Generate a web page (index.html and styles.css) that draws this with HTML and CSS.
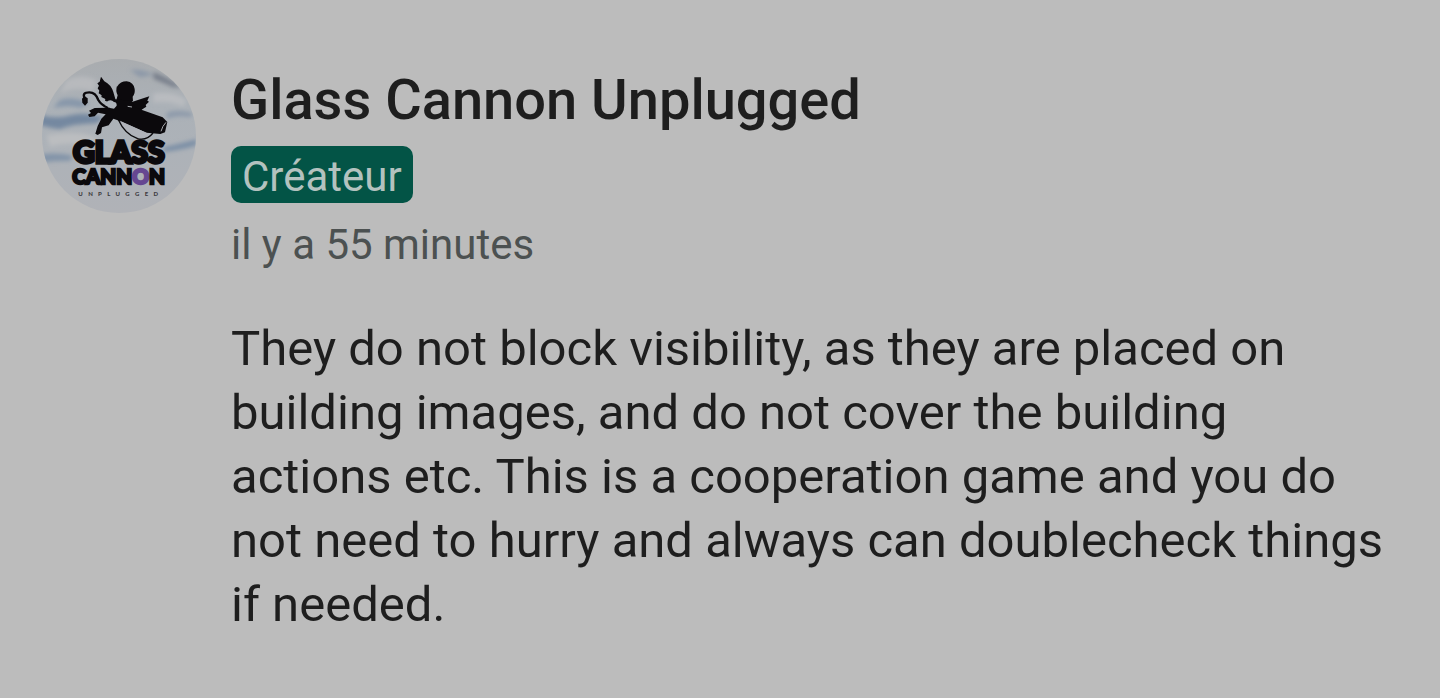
FILE: index.html
```html
<!DOCTYPE html>
<html lang="fr">
<head>
  <meta charset="UTF-8" />
  <meta name="viewport" content="width=device-width, initial-scale=1" />
  <title>Commentaires – Glass Cannon Unplugged</title>
  <link rel="stylesheet" href="styles.css">
</head>
<body>
  <article class="comment">
    <svg class="avatar" viewBox="36 27 462 462" role="img" aria-label="Glass Cannon Unplugged">
      <defs>
        <linearGradient id="sky" x1="0" y1="0" x2="0" y2="1">
          <stop offset="0" stop-color="#a9acaf" />
          <stop offset="0.3" stop-color="#abb1b7" />
          <stop offset="0.6" stop-color="#adb2b8" />
          <stop offset="1" stop-color="#b0b2b7" />
        </linearGradient>
        <clipPath id="disc"><circle cx="267" cy="258" r="231" /></clipPath>
        <filter id="soft" x="-30%" y="-80%" width="160%" height="260%"><feGaussianBlur stdDeviation="7" /></filter>
      </defs>

      <g clip-path="url(#disc)">
        <rect x="36" y="27" width="462" height="462" fill="url(#sky)" />
        <g filter="url(#soft)">
          <path fill="#7488a0" d="M30 194 Q80 208 120 196 T220 202 L200 220 Q120 222 90 238 Q60 234 30 226Z" />
          <path fill="#8797aa" d="M90 150 Q130 138 180 160 L150 174 Q120 164 70 174Z" />
          <path fill="#8394a9" d="M30 314 Q80 306 130 318 L120 332 Q70 332 30 338Z" />
          <path fill="#7c8fa6" d="M400 292 Q440 284 500 268 L500 286 Q450 302 400 306Z" />
          <path fill="#787f8b" d="M370 66 Q410 80 455 112 L430 112 Q400 98 370 86Z" />
          <path fill="#8c98a8" d="M300 60 Q340 56 370 74 L330 82Z" />
          <path fill="#8d9aaa" d="M410 188 Q450 176 490 190 L480 202 Q450 194 410 206Z" />
          <path fill="#bbbdc0" d="M50 256 Q140 240 200 262 L190 294 Q120 270 60 290Z" />
          <path fill="#b9bcc0" d="M370 130 Q430 122 470 150 L460 170 Q420 150 370 158Z" />
          <path fill="#b8babd" d="M110 90 Q160 70 200 92 L190 124 Q140 108 90 130Z" />
        </g>

        <!-- cherub riding the cannon -->
        <g fill="#0b090c">
          <path d="M213 80 L223 94 Q243 104 250 126 L258 154 L242 158 L225 152 L226 147 L214 141 L215 136 L206 130 L208 122 L203 115 L207 107 L202 100 L209 95Z" />
          <path d="M261 110 Q271 94 290 94 Q311 97 314 117 Q316 131 308 140 L309 153 L298 160 L276 160 L259 150 L263 136 Q256 122 261 108Z" />
          <path d="M299 158 L326 149 L358 139 L352 152 L357 155 L347 165 L349 170 L337 178 L328 186 L303 176Z" />
          <path d="M254 148 L304 152 L314 170 L330 178 L398 202 L412 216 L405 247 L391 252 L350 248 L302 227 L263 211 L250 206 L236 226 L216 232 L213 249 L203 255 L196 251 L203 228 L214 206 L227 193 L204 188 L194 199 L178 201 L174 194 L183 189 L177 182 L194 174 L235 173Z" />
          <path d="M156 146 L163 138 L173 145 L173 158 L165 167 L157 158Z" />
        </g>
        <path fill="none" stroke="#0b090c" stroke-width="7" d="M164 145 Q155 127 178 127 Q197 127 205 150 Q213 165 234 173" />
        <path fill="#b0b3ba" d="M270 212 L352 250 L362 252 Q350 266 324 261 Q289 248 270 212Z" />
        <path fill="none" stroke="#0b090c" stroke-width="4" d="M265 209 Q285 253 323 266 Q350 273 369 249" />
        <path fill="#adb3ba" d="M233 153 Q244 147 252 156 Q261 157 260 167 L252 176 L240 174 L226 166Z" />
        <path fill="none" stroke="#a9abb0" stroke-width="3" d="M408 217 Q397 228 393 244 M293 169 L306 171" />

        <g class="logo">
          <text class="logo-glass" x="266" y="340">GLASS</text>
          <text class="logo-cannon" x="266" y="401">CANN<tspan class="logo-o">O</tspan>N</text>
          <text class="logo-unplugged" x="145" y="437">UNPLUGGED</text>
        </g>
      </g>
    </svg>

    <div class="content">
      <header class="author">
        <h1 class="name">Glass Cannon Unplugged</h1>
        <span class="badge">Créateur</span>
        <time class="date">il y a 55 minutes</time>
      </header>
      <p class="message">They do not block visibility, as they are placed on building images, and do not cover the building actions etc. This is a cooperation game and you do not need to hurry and always can doublecheck things if needed.</p>
    </div>
  </article>
</body>
</html>
```

FILE: styles.css
```css
body {
  margin: 0;
  background: #bcbcbc;
  color: #1e1e1e;
  font-family: Roboto, Arial, sans-serif;
}
.comment {
  display: flex;
  align-items: flex-start;
  gap: 35px;
  padding: 59px 46px 60px 42px;
}
.avatar {
  flex: none;
  width: 154px;
  height: 154px;
}
.content {
  flex: 1;
  min-width: 0;
}
.author {
  display: flex;
  flex-direction: column;
  align-items: flex-start;
  padding-top: 9px;
}
.name {
  margin: 0;
  font-size: 56px;
  line-height: 64px;
  font-weight: 500;
}
.badge {
  margin-top: 14px;
  padding: 6px 11px 1px;
  border-radius: 10px;
  background: #035446;
  color: #b3c2bf;
  font-size: 42px;
  line-height: 50px;
}
.date {
  margin-top: 16px;
  color: #4c5151;
  font-size: 42px;
  line-height: 52px;
}
.message {
  margin: 46px 0 0;
  font-size: 49px;
  line-height: 64px;
}
.logo {
  fill: #0b090c;
  font-family: Lato, sans-serif;
  font-weight: 900;
  text-anchor: middle;
}
.logo-glass {
  font-size: 90px;
  stroke: #0b090c;
  stroke-width: 10px;
}
.logo-cannon {
  font-size: 62px;
  stroke: #0b090c;
  stroke-width: 7px;
}
.logo-o {
  fill: #664791;
  stroke: #664791;
}
.logo-unplugged {
  fill: #3c3b40;
  font-size: 18px;
  letter-spacing: 16px;
  text-anchor: start;
}
@media (max-width: 700px) {
  .comment {
    gap: 16px;
    padding: 24px 16px;
  }
}
```
